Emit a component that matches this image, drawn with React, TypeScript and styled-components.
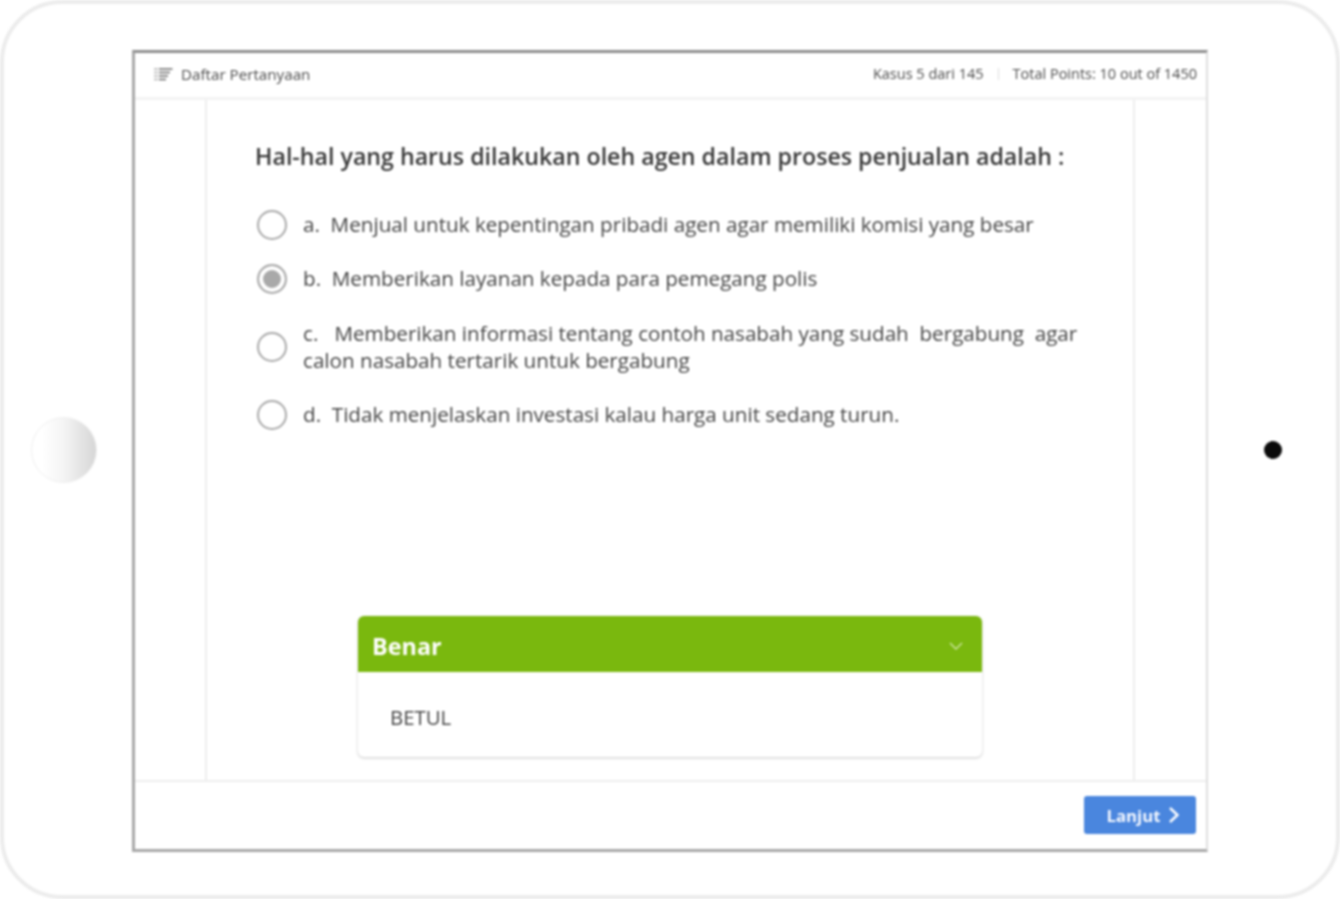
import styled, { createGlobalStyle } from "styled-components"

const OPTIONS = [
  { id: "a", lines: "a.\u00a0 Menjual untuk kepentingan pribadi agen agar memiliki komisi yang besar" },
  { id: "b", lines: "b.\u00a0 Memberikan layanan kepada para pemegang polis", picked: true },
  { id: "c", lines: "c.\u00a0\u00a0 Memberikan informasi tentang contoh nasabah yang sudah\u00a0 bergabung\u00a0 agar calon nasabah tertarik untuk bergabung", tall: true },
  { id: "d", lines: "d.\u00a0 Tidak menjelaskan investasi kalau harga unit sedang turun." },
]

const GlobalStyle = createGlobalStyle`
  html, body { margin: 0; padding: 0; background: #fff; }
  body { font-family: "Open Sans", "Liberation Sans", sans-serif; color: #444; }
  * { box-sizing: border-box; }
`

export default function App() {
  return (
    <>
      <GlobalStyle />
      <Device>
        <Bezel>
          <HomeButton />
        </Bezel>

        <Screen>
          <TopBar>
            <ListLink>
              <ListIcon width="20" height="14" viewBox="0 0 20 14">
                <path d="M1 2h4M1 5.5h4M1 9h4M1 12.5h4" stroke="#b5b5b5" strokeWidth="1.4" />
                <path d="M6 2h13.5M6 5.5h11M6 9h9M6 12.5h7" stroke="#6a6a6a" strokeWidth="1.6" />
              </ListIcon>
              Daftar Pertanyaan
            </ListLink>
            <Stats>
              <span>Kasus 5 dari 145</span>
              <Divider />
              <span>Total Points: 10 out of 1450</span>
            </Stats>
          </TopBar>

          <Main>
            <Column>
              <Question>Hal-hal yang harus dilakukan oleh agen dalam proses penjualan adalah :</Question>
              <OptionList>
                {OPTIONS.map(option => (
                  <Option key={option.id} $tall={option.tall}>
                    <Radio $picked={option.picked} />
                    <OptionText $tall={option.tall}>{option.lines}</OptionText>
                  </Option>
                ))}
              </OptionList>

              <Feedback>
                <FeedbackHead>
                  Benar
                  <svg width="16" height="10" viewBox="0 0 16 10" fill="none">
                    <path d="M2 2l6 6 6-6" stroke="#cfe6a4" strokeWidth="1.4" />
                  </svg>
                </FeedbackHead>
                <FeedbackBody>BETUL</FeedbackBody>
              </Feedback>
            </Column>
          </Main>

          <BottomBar>
            <NextButton>
              Lanjut
              <svg width="12" height="18" viewBox="0 0 12 18" fill="none">
                <path d="M3 2l7.5 7L3 16" stroke="#fff" strokeWidth="2.4" />
              </svg>
            </NextButton>
          </BottomBar>
        </Screen>

        <Bezel>
          <Camera />
        </Bezel>
      </Device>
    </>
  )
}

const Device = styled.div`
  width: 1340px;
  height: 899px;
  display: grid;
  grid-template-columns: 128px 1076px 128px;
  align-items: center;
  background: #fff;
  border: 4px solid #ececec;
  border-radius: 62px;
  filter: blur(0.8px);
`

const Bezel = styled.div`
  display: flex;
  justify-content: center;
  align-items: center;
`

const HomeButton = styled.div`
  width: 66px;
  height: 66px;
  border-radius: 50%;
  margin-left: -8px;
  background: linear-gradient(90deg, #fff 15%, #f4f4f4 50%, #d6d6d6 100%);
  border: 1px solid #f0f0f0;
`

const Camera = styled.div`
  width: 18px;
  height: 18px;
  border-radius: 50%;
  margin-left: 2px;
  background: #0a0a0a;
`

const Screen = styled.div`
  height: 802px;
  margin-top: 3px;
  display: flex;
  flex-direction: column;
  background: #fff;
  border-top: 3px solid #8f8f8f;
  border-left: 3px solid #a8a8a8;
  border-right: 2px solid #dedede;
  border-bottom: 3px solid #a8a8a8;
`

const TopBar = styled.header`
  height: 47px;
  flex: none;
  display: flex;
  align-items: center;
  justify-content: space-between;
  padding: 0 9px 3px 18px;
  border-bottom: 3px solid #f3f3f3;
  color: #4c4c4c;
`

const ListLink = styled.div`
  display: flex;
  align-items: center;
  gap: 8px;
  font-size: 15.2px;
`

const ListIcon = styled.svg`
  flex: none;
`

const Stats = styled.div`
  display: flex;
  align-items: center;
  gap: 12px;
  font-size: 14.5px;
`

const Divider = styled.i`
  width: 1px;
  height: 12px;
  margin: 0 2px;
  background: #ddd;
`

const Main = styled.main`
  flex: 1;
  min-height: 0;
  display: flex;
  justify-content: center;
  border-bottom: 2px solid #eee;
`

const Column = styled.section`
  width: 930px;
  margin-left: -1px;
  display: flex;
  flex-direction: column;
  padding: 41px 48px 23px;
  border-left: 2px solid #eee;
  border-right: 2px solid #eee;
`

const Question = styled.h1`
  margin: 0;
  font-size: 23.2px;
  line-height: 30px;
  font-weight: 600;
  color: #383838;
  white-space: nowrap;
`

const OptionList = styled.ul`
  list-style: none;
  margin: 37px 0 0;
  padding: 0;
  display: flex;
  flex-direction: column;
  gap: 20px;
`

const Option = styled.li<{ $tall?: boolean }>`
  display: flex;
  align-items: center;
  gap: 16px;
  padding-left: 2px;
  min-height: ${p => (p.$tall ? "62px" : "34px")};
`

const Radio = styled.span<{ $picked?: boolean }>`
  flex: none;
  width: 30px;
  height: 30px;
  border-radius: 50%;
  border: 2px solid #a9a9a9;
  background: ${p => (p.$picked ? "#a9a9a9" : "#fff")};
  box-shadow: ${p => (p.$picked ? "inset 0 0 0 4px #fff" : "none")};
`

const OptionText = styled.span<{ $tall?: boolean }>`
  font-size: 20.65px;
  line-height: 27px;
  margin-bottom: ${p => (p.$tall ? "0" : "2px")};
  color: #444;
`

const Feedback = styled.div`
  width: 624px;
  margin: auto 0 0 103px;
  border-radius: 6px;
  background: #fff;
  box-shadow: 0 1px 3px rgba(0, 0, 0, 0.22);
  overflow: hidden;
`

const FeedbackHead = styled.div`
  height: 56px;
  padding: 4px 18px 0 14px;
  display: flex;
  align-items: center;
  justify-content: space-between;
  background: #7ab80e;
  color: #fff;
  font-size: 23.4px;
  font-weight: 700;
`

const FeedbackBody = styled.div`
  height: 85px;
  padding: 30px 32px 0;
  font-size: 20.4px;
  line-height: 30px;
  color: #444;
`

const BottomBar = styled.footer`
  height: 67px;
  flex: none;
  display: flex;
  align-items: center;
  justify-content: flex-end;
  padding: 0 10px 1px 0;
`

const NextButton = styled.button`
  width: 112px;
  height: 38px;
  padding: 0 0 0 5px;
  display: flex;
  align-items: center;
  justify-content: center;
  gap: 6px;
  border: 0;
  border-radius: 3px;
  background: #4a86de;
  color: #f4f8ff;
  font-family: inherit;
  font-size: 16.8px;
  font-weight: 700;
`
